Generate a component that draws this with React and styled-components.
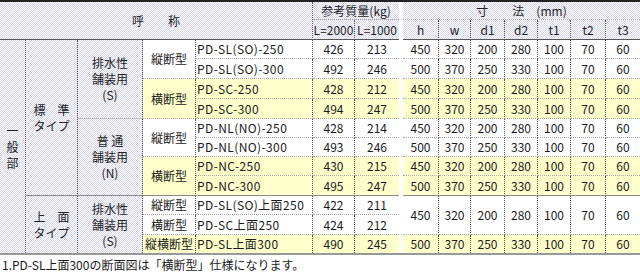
import React from "react";
import styled, { createGlobalStyle, css } from "styled-components";

const GlobalStyle = createGlobalStyle`
  html, body {
    margin: 0;
    padding: 0;
    background: #fff;
  }
  body {
    font-family: "Noto Sans CJK JP", "Noto Sans", sans-serif;
    color: #1a1a1a;
  }
`;

const dither = css`
  background-color: #fff;
  background-image: repeating-conic-gradient(#d6d6ee 0 25%, #ffffff 0 50%);
  background-size: 2px 2px;
`;

const Table = styled.table`
  width: 640px;
  table-layout: fixed;
  border-collapse: separate;
  border-spacing: 0;
  border-top: 2px solid #222;
  border-bottom: 2px solid #999;
  font-size: 12px;
`;

const Col = styled.col`
  width: ${(p) => p.$w}px;
`;

const Row = styled.tr`
  height: ${(p) => p.$h}px;
`;

const bottomLine = {
  dotted: "1px dotted #a8a8a8",
  solid: "1px solid #8a8a8a",
  head: "1px solid #555",
  none: "none",
};

const Cell = styled.td`
  box-sizing: border-box;
  padding: 0;
  border-right: ${(p) => (p.$noRight ? "none" : "1px dotted #555")};
  border-bottom: ${(p) => bottomLine[p.$bottom || "dotted"]};
  background: ${(p) => (p.$yellow ? "#ffffcc" : "#ffffff")};
  text-align: center;
  vertical-align: middle;
  white-space: nowrap;
  line-height: 16px;
  overflow: hidden;
`;

const HeadCell = styled(Cell).attrs({ as: "th" })`
  ${dither};
  font-weight: normal;
  color: #222;
`;

const CatCell = styled(Cell)`
  ${dither};
  color: #222;
`;

const NameCell = styled(Cell)`
  text-align: left;
  padding-left: 1px;
  letter-spacing: 0.4px;
`;

const Gap = styled.td`
  padding: 0;
  border: none;
  background: #fff;
`;

const Note = styled.p`
  margin: 0;
  padding-left: 2px;
  font-size: 12px;
  line-height: 20px;
  color: #1a1a1a;
  white-space: nowrap;
`;

const widths = [26, 52, 65, 53, 117, 42, 44, 4, 36, 32, 34, 33, 33, 35, 34];
const dimsA = [450, 320, 200, 280, 100, 70, 60];
const dimsB = [500, 370, 250, 330, 100, 70, 60];

const Dims = ({ values, yellow, rowSpan, bottom }) =>
  values.map((v, i) => (
    <Cell
      key={i}
      rowSpan={rowSpan}
      $yellow={yellow}
      $bottom={bottom}
      $noRight={i === values.length - 1}
    >
      {v}
    </Cell>
  ));

const Mass = ({ a, b, yellow, bottom }) => (
  <>
    <Cell $yellow={yellow} $bottom={bottom}>{a}</Cell>
    <Cell $yellow={yellow} $bottom={bottom} $noRight>{b}</Cell>
  </>
);

export default function App() {
  return (
    <>
      <GlobalStyle />
      <Table>
        <colgroup>
          {widths.map((w, i) => (
            <Col key={i} $w={w} />
          ))}
        </colgroup>
        <tbody>
          <Row $h={18}>
            <HeadCell colSpan={5} rowSpan={2} $bottom="head">
              呼　　称
            </HeadCell>
            <HeadCell colSpan={2} $noRight>参考質量(kg)</HeadCell>
            <Gap rowSpan={13} />
            <HeadCell colSpan={7} $noRight>寸　　法　(mm)</HeadCell>
          </Row>
          <Row $h={20}>
            <HeadCell $bottom="head">L=2000</HeadCell>
            <HeadCell $bottom="head" $noRight>L=1000</HeadCell>
            {["h", "w", "d1", "d2", "t1", "t2", "t3"].map((t, i) => (
              <HeadCell key={t} $bottom="head" $noRight={i === 6}>
                {t}
              </HeadCell>
            ))}
          </Row>
          <Row $h={19}>
            <CatCell rowSpan={11} $bottom="none">
              一<br />般<br />部
            </CatCell>
            <CatCell rowSpan={8} $bottom="solid">
              標　準<br />タイプ
            </CatCell>
            <CatCell rowSpan={4}>
              排水性<br />舗装用<br />(S)
            </CatCell>
            <Cell rowSpan={2}>縦断型</Cell>
            <NameCell>PD-SL(SO)-250</NameCell>
            <Mass a={426} b={213} />
            <Dims values={dimsA} />
          </Row>
          <Row $h={20}>
            <NameCell>PD-SL(SO)-300</NameCell>
            <Mass a={492} b={246} />
            <Dims values={dimsB} />
          </Row>
          <Row $h={20}>
            <Cell rowSpan={2} $yellow>横断型</Cell>
            <NameCell $yellow>PD-SC-250</NameCell>
            <Mass a={428} b={212} yellow />
            <Dims values={dimsA} yellow />
          </Row>
          <Row $h={20}>
            <NameCell $yellow>PD-SC-300</NameCell>
            <Mass a={494} b={247} yellow />
            <Dims values={dimsB} yellow />
          </Row>
          <Row $h={19}>
            <CatCell rowSpan={4} $bottom="solid">
              普 通<br />舗装用<br />(N)
            </CatCell>
            <Cell rowSpan={2}>縦断型</Cell>
            <NameCell>PD-NL(NO)-250</NameCell>
            <Mass a={428} b={214} />
            <Dims values={dimsA} />
          </Row>
          <Row $h={19}>
            <NameCell>PD-NL(NO)-300</NameCell>
            <Mass a={493} b={246} />
            <Dims values={dimsB} />
          </Row>
          <Row $h={19}>
            <Cell rowSpan={2} $yellow $bottom="solid">横断型</Cell>
            <NameCell $yellow>PD-NC-250</NameCell>
            <Mass a={430} b={215} yellow />
            <Dims values={dimsA} yellow />
          </Row>
          <Row $h={20}>
            <NameCell $yellow $bottom="solid">PD-NC-300</NameCell>
            <Mass a={495} b={247} yellow bottom="solid" />
            <Dims values={dimsB} yellow bottom="solid" />
          </Row>
          <Row $h={19}>
            <CatCell rowSpan={3} $bottom="none">
              上　面<br />タイプ
            </CatCell>
            <CatCell rowSpan={3} $bottom="none">
              排水性<br />舗装用<br />(S)
            </CatCell>
            <Cell>縦断型</Cell>
            <NameCell>PD-SL(SO)上面250</NameCell>
            <Mass a={422} b={211} />
            <Dims values={dimsA} rowSpan={2} />
          </Row>
          <Row $h={20}>
            <Cell>横断型</Cell>
            <NameCell>PD-SC上面250</NameCell>
            <Mass a={424} b={212} />
          </Row>
          <Row $h={18}>
            <Cell $yellow $bottom="none">縦横断型</Cell>
            <NameCell $yellow $bottom="none">PD-SL上面300</NameCell>
            <Mass a={490} b={245} yellow bottom="none" />
            <Dims values={dimsB} yellow bottom="none" />
          </Row>
        </tbody>
      </Table>
      <Note>1.PD-SL上面300の断面図は「横断型」仕様になります。</Note>
    </>
  );
}
